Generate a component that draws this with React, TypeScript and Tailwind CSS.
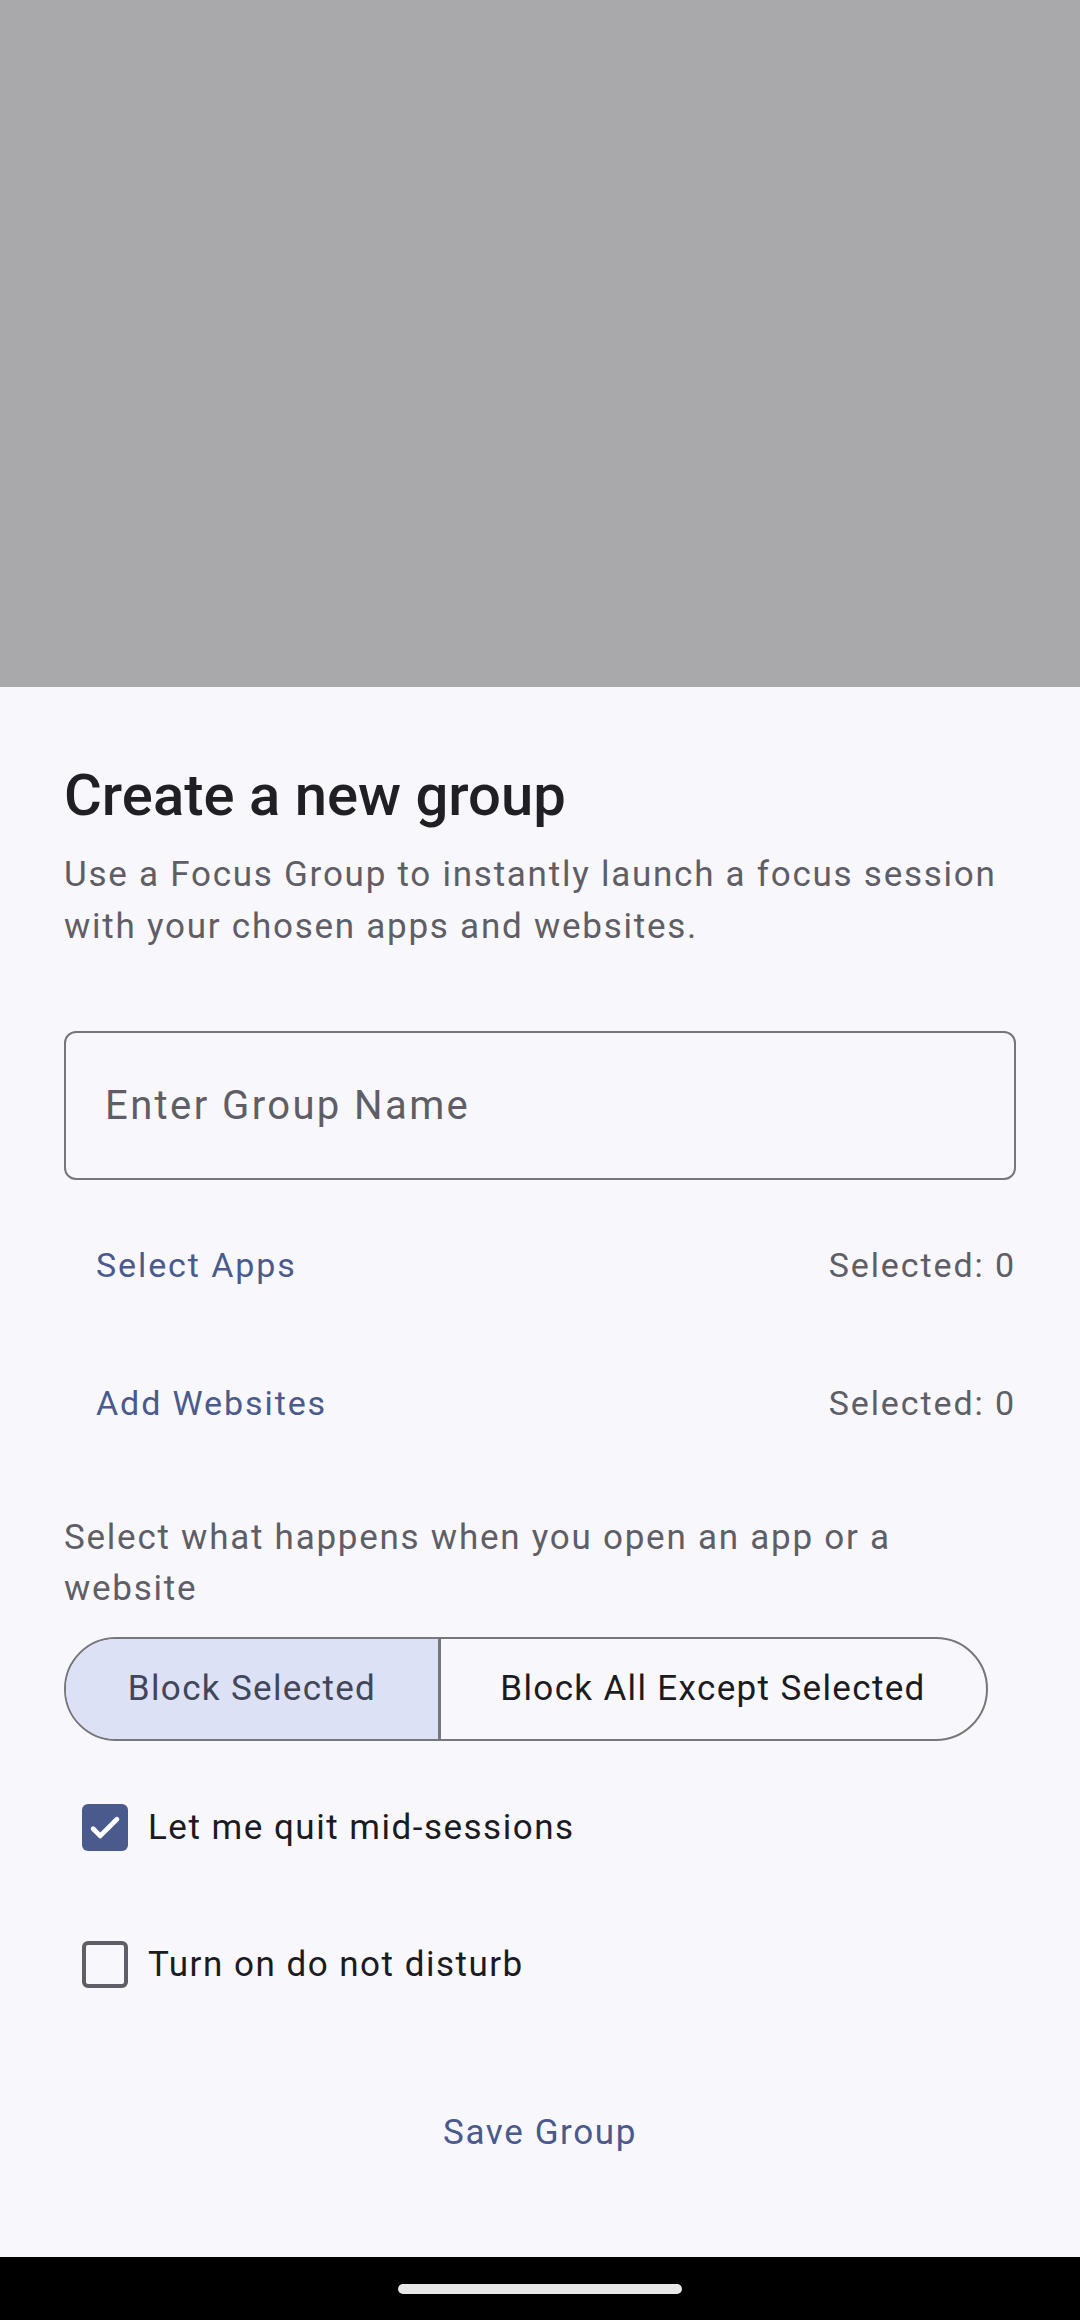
import { useState } from "react";

const font = { fontFamily: "Roboto, 'Noto Sans', sans-serif" };

const CheckRow: React.FC<{ label: string; checked: boolean; onToggle: () => void }> = ({
  label,
  checked,
  onToggle,
}) => (
  <button onClick={onToggle} className="flex h-[137px] w-full items-center pl-[18px] text-left">
    {checked ? (
      <span className="flex h-[47px] w-[46px] items-center justify-center rounded-[6px] bg-[#4b5a8c]">
        <svg width="38" height="38" viewBox="0 0 24 24" fill="none">
          <path d="M4.5 12.5l4.5 4.5L19.5 6.5" stroke="#ffffff" strokeWidth="3" strokeLinecap="round" strokeLinejoin="round" />
        </svg>
      </span>
    ) : (
      <span className="h-[47px] w-[46px] rounded-[6px] border-[4.5px] border-[#5f5e66]" />
    )}
    <span className="ml-[20px] text-[35px] leading-[44px] tracking-[1.5px] text-[#1b1b21]">{label}</span>
  </button>
);

export default function App() {
  const [mode, setMode] = useState<number>(0);
  const [quit, setQuit] = useState<boolean>(true);
  const [dnd, setDnd] = useState<boolean>(false);

  return (
    <div className="flex h-[2320px] w-[1080px] flex-col" style={font}>
      {/* dimmed screen behind the sheet */}
      <div className="h-[687px] bg-[#a9a8ab]" />

      <div className="flex flex-1 flex-col bg-[#f8f8fc] px-[64px] pt-[73px]">
        <h1 className="text-[58px] font-medium leading-[70px] text-[#1f1f25]">Create a new group</h1>
        <p className="mt-[19px] text-[35px] leading-[52px] tracking-[1.75px] text-[#5f5e66]">
          Use a Focus Group to instantly launch a focus session with your chosen apps and websites.
        </p>

        <input
          placeholder="Enter Group Name"
          className="mt-[78px] h-[149px] w-full rounded-[12px] border-[2.5px] border-[#77767b] bg-transparent pl-[39px] text-[40px] tracking-[2.4px] text-[#1b1b21] outline-none placeholder:text-[#5f5e66]"
        />

        <div className="mt-[16px] flex flex-col">
          <div className="flex h-[138px] items-center justify-between pl-[32px] text-[34px] tracking-[1.9px]">
            <span className="text-[#4b5a8c]">Select Apps</span>
            <span className="text-[#5f5e66]">Selected: 0</span>
          </div>
          <div className="flex h-[138px] items-center justify-between pl-[32px] text-[34px] tracking-[1.9px]">
            <span className="text-[#4b5a8c]">Add Websites</span>
            <span className="text-[#5f5e66]">Selected: 0</span>
          </div>
        </div>

        <p className="mt-[40px] text-[35px] leading-[51px] tracking-[1.75px] text-[#5f5e66]">
          Select what happens when you open an app or a website
        </p>

        <div className="mt-[23px] flex h-[104px] self-start overflow-hidden rounded-full border-[2.5px] border-[#77767b] text-[35px] tracking-[1.35px]">
          <button
            onClick={() => setMode(0)}
            className={
              mode === 0
                ? "h-full w-[372px] bg-[#dce1f6] text-[#414659]"
                : "h-full w-[372px] text-[#1b1b21]"
            }
          >
            Block Selected
          </button>
          <div className="w-[2.5px] bg-[#77767b]" />
          <button
            onClick={() => setMode(1)}
            className={
              mode === 1
                ? "h-full w-[545px] bg-[#dce1f6] text-[#414659]"
                : "h-full w-[545px] text-[#1b1b21]"
            }
          >
            Block All Except Selected
          </button>
        </div>

        <div className="mt-[18px] flex flex-col">
          <CheckRow label="Let me quit mid-sessions" checked={quit} onToggle={() => setQuit(!quit)} />
          <CheckRow label="Turn on do not disturb" checked={dnd} onToggle={() => setDnd(!dnd)} />
        </div>

        <button className="mx-auto mt-[50px] h-[100px] px-6 text-[35px] tracking-[1.6px] text-[#4b5a8c]">
          Save Group
        </button>
      </div>

      {/* navigation bar */}
      <div className="flex h-[63px] items-center justify-center bg-black">
        <div className="h-[10px] w-[284px] rounded-full bg-[#e8e8e8]" />
      </div>
    </div>
  );
}
